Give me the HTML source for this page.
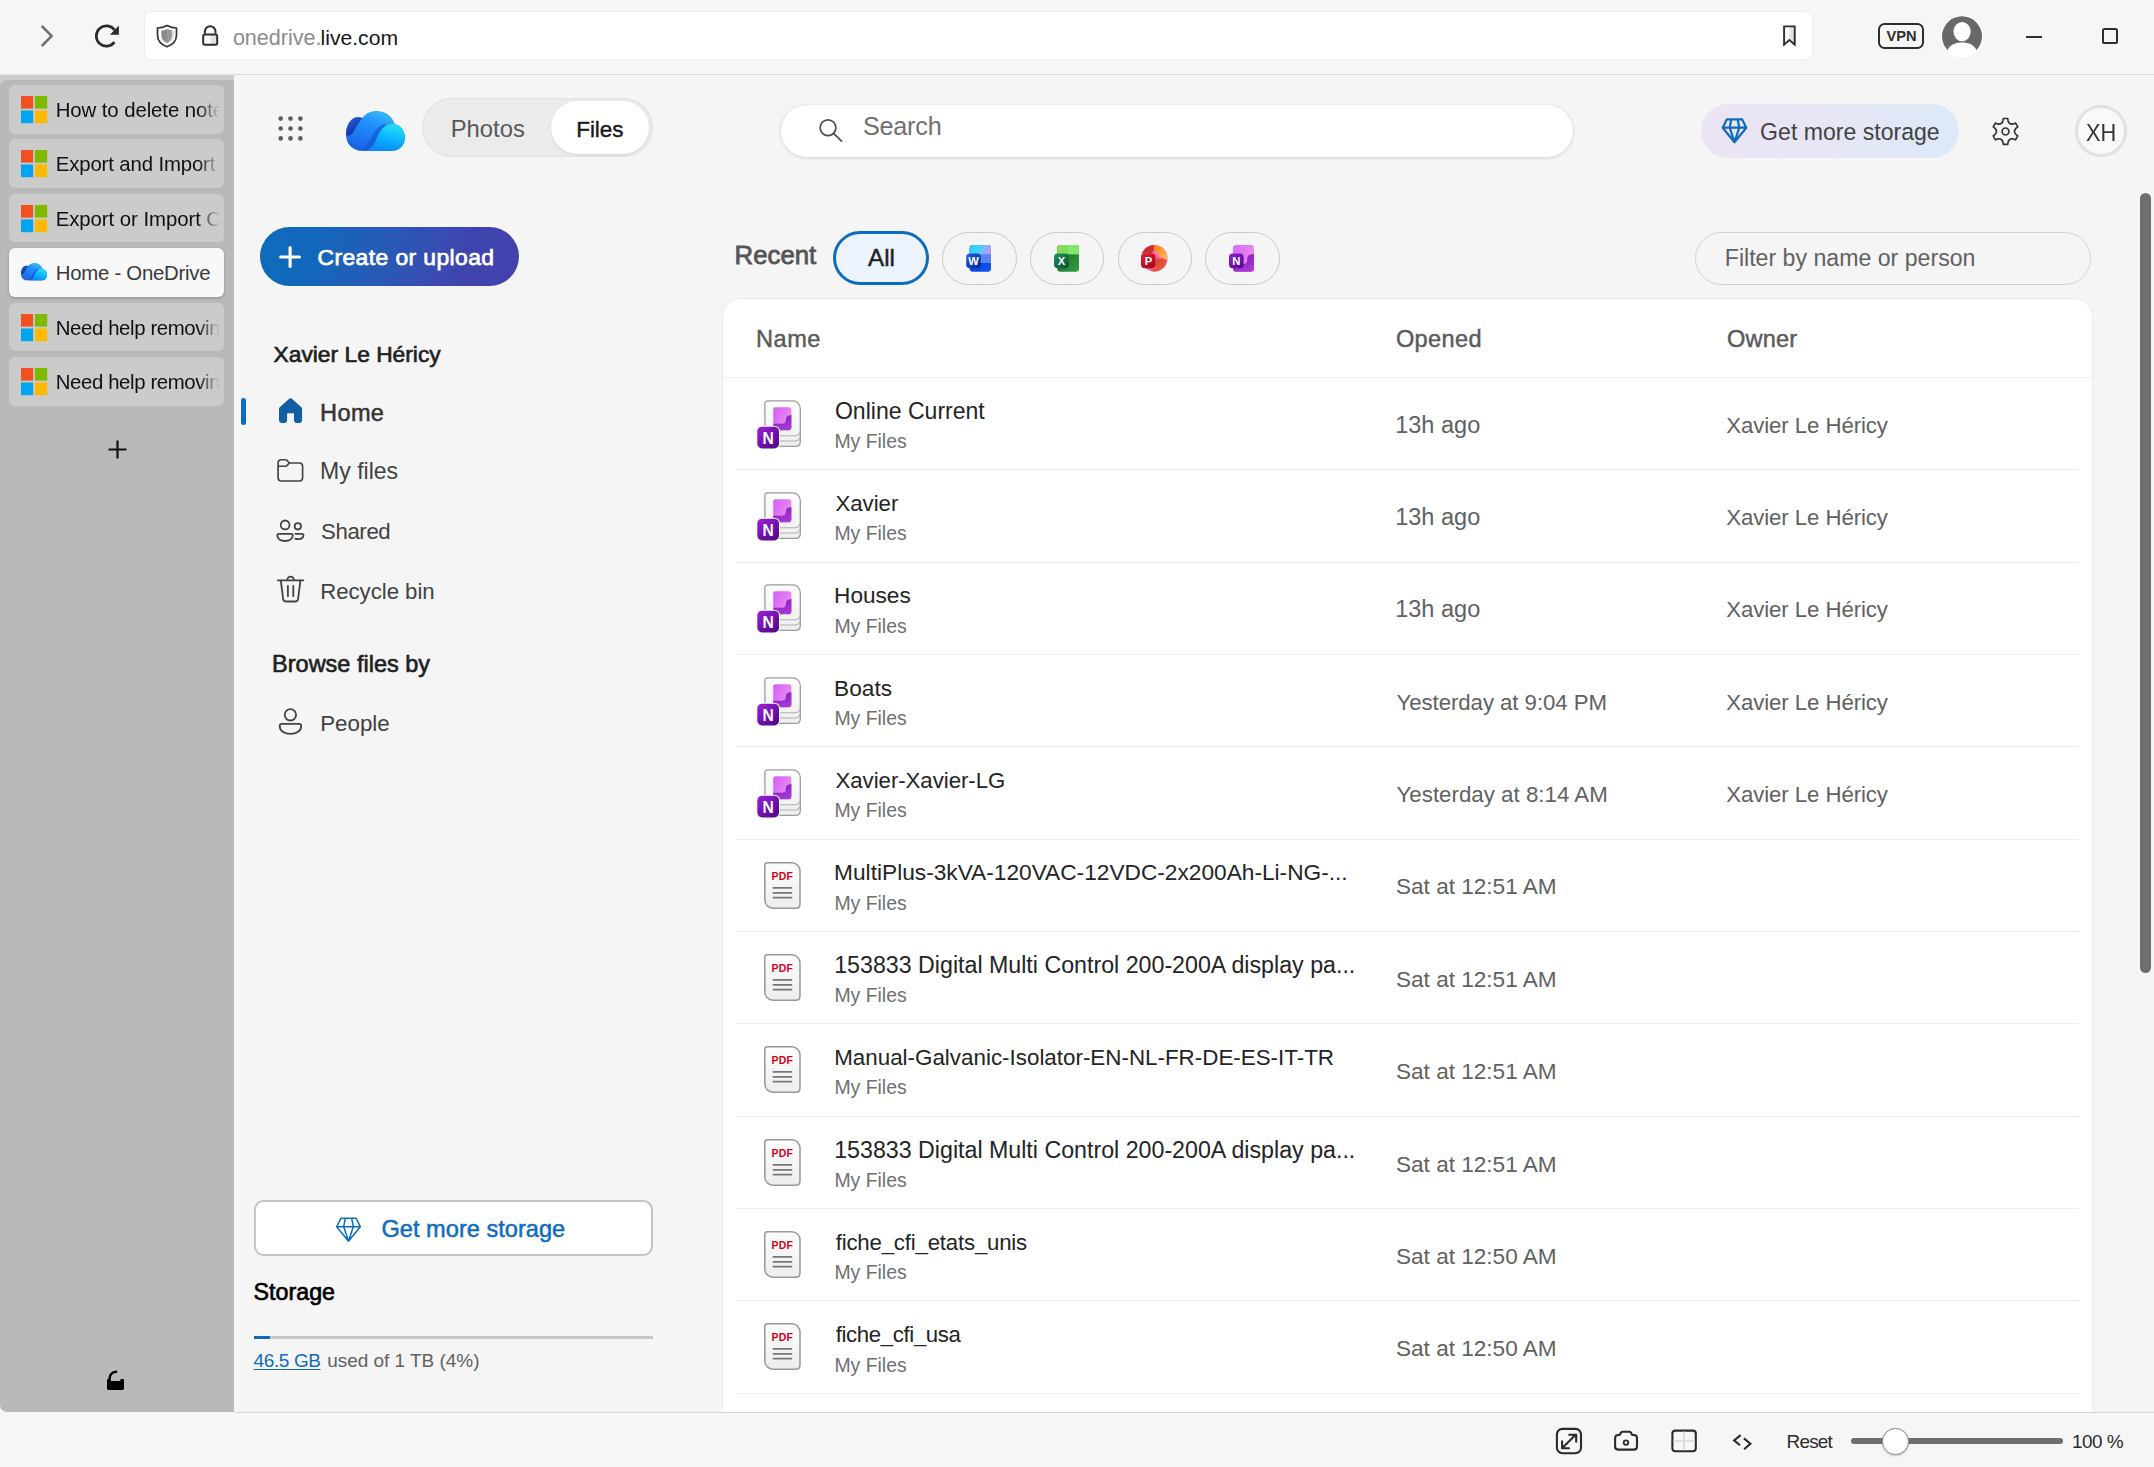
<!DOCTYPE html>
<html lang="en"><head><meta charset="utf-8"><title>Home - OneDrive</title>
<style>
html,body{margin:0;padding:0;}
body{width:2154px;height:1467px;overflow:hidden;background:#f5f5f5;font-family:"Liberation Sans", sans-serif;position:relative;}
.t{position:absolute;white-space:nowrap;}
svg{overflow:visible;}
</style></head><body>
<div style="position:absolute;left:0.0px;top:0.0px;width:2154.0px;height:74.0px;background:#f6f6f6;"></div>
<div style="position:absolute;left:233.5px;top:73.9px;width:1920.5px;height:1.1px;background:#dadada;"></div>
<div style="position:absolute;left:143.6px;top:10.8px;width:1669.7px;height:49.4px;background:#fff;border-radius:7px;border:1px solid #eeeeee;box-sizing:border-box;"></div>
<svg style="position:absolute;left:38.0px;top:23.0px;" width="18.0" height="26.0" viewBox="0 0 18 26"><path d="M3.700 2.800 L13.700 13 L3.700 23.200" fill="none" stroke="#6e6e6e" stroke-width="2.5" stroke-linecap="butt" stroke-linejoin="miter"/></svg>
<svg style="position:absolute;left:0.0px;top:0.0px;" width="130.0" height="60.0" viewBox="0 0 130 60"><path d="M114.470 29.920 A10.100 10.100 0 1 0 114.470 42.080" fill="none" stroke="#2b2b2b" stroke-width="2.700" stroke-linecap="butt"/><path d="M118.900 25.500 V34.700 H109.900 Z" fill="#2b2b2b"/></svg>
<svg style="position:absolute;left:156.0px;top:24.0px;" width="22.0" height="24.0" viewBox="0 0 22 24"><path d="M11 1.5 C8 3.2 5 4 1.5 4 L1.5 11 C1.5 17 5.5 20.8 11 22.8 C16.5 20.8 20.5 17 20.5 11 L20.5 4 C17 4 14 3.2 11 1.5 Z" fill="none" stroke="#333" stroke-width="1.7" stroke-linejoin="round"/><path d="M11 5 C9 6 7 6.600 5 6.800 L5 11 C5 15 7.500 17.600 11 19.200 C15 17.500 18 15 18.300 11 L18.300 7 C16 6.600 13.500 6 11 5 Z" fill="#dedede"/><path d="M11 5 C9 6 7 6.600 5.400 6.800 L5.400 11 C5.400 14.800 7.700 17.400 11 19 C13.500 17.800 15.600 15.500 15.600 11.500 L15.600 6.500 C14 6.200 12.500 5.700 11 5 Z" fill="#8c8c8c"/><path d="M11 5 C12.500 5.700 14 6.200 15.600 6.500 L15.600 11.500 C15.600 15.500 13.500 17.800 11 19 Z" fill="#999"/></svg>
<svg style="position:absolute;left:201.0px;top:24.0px;" width="18.0" height="23.0" viewBox="0 0 18 23"><path d="M3.900 9.700 V7.500 A5.300 5.300 0 0 1 14.500 7.500 V9.700" fill="none" stroke="#2e2e2e" stroke-width="2"/><rect x="2.200" y="10.600" width="14" height="10.200" fill="#fff"/><rect x="9.400" y="10.600" width="6.600" height="10.200" fill="#e2e2e2"/><rect x="2.200" y="10.600" width="14" height="10.200" rx="1.800" fill="none" stroke="#2e2e2e" stroke-width="2"/></svg>
<div class="t " style="left:232.9px;top:23px;font-size:21.56px;line-height:29px;color:#8c8c8c;">onedrive.</div>
<div class="t " style="left:320.5px;top:24px;font-size:21.14px;line-height:27px;color:#161616;">live.com</div>
<svg style="position:absolute;left:1781.0px;top:24.0px;" width="17.0" height="23.0" viewBox="0 0 17 23"><path d="M8.400 2.400 H13.700 V20 L8.400 15.400 Z" fill="#e3e3e3"/><path d="M3.100 2.400 H13.700 V20.600 L8.400 16 L3.100 20.600 Z" fill="none" stroke="#2e2e2e" stroke-width="1.900" stroke-linejoin="miter"/></svg>
<div style="position:absolute;left:1878.0px;top:23.0px;width:46.0px;height:26.0px;border:2.4px solid #2e2e2e;border-radius:6.5px;box-sizing:border-box;"></div>
<div class="t " style="left:1886.5px;top:26px;font-size:14.63px;line-height:20px;color:#2e2e2e;font-weight:700;">VPN</div>
<svg style="position:absolute;left:1941.0px;top:14.0px;" width="43.0" height="45.0" viewBox="0 0 43 45"><circle cx="21" cy="22.300" r="21.300" fill="#fff"/><circle cx="21" cy="22.300" r="20" fill="#686868"/><ellipse cx="21.100" cy="17.600" rx="8.600" ry="9.600" fill="#fff"/><path d="M6.300 36.200 C9 30.800 14 28.400 21 28.400 C28 28.400 33 30.800 35.700 36.200 C32.500 40.800 27 43.700 21 43.700 C15 43.700 9.500 40.800 6.300 36.200 Z" fill="#fff"/></svg>
<div style="position:absolute;left:2026.2px;top:36.0px;width:15.6px;height:2.0px;background:#2e2e2e;"></div>
<div style="position:absolute;left:2102.2px;top:28.2px;width:15.8px;height:16.1px;border:2.1px solid #2e2e2e;border-radius:2.6px;box-sizing:border-box;"></div>
<div style="position:absolute;left:0.0px;top:73.7px;width:233.5px;height:12.3px;background:linear-gradient(180deg,#f0f0f0 0,#cecece 1.6px,#cccccc 2.5px,#cccccc 100%);"></div>
<div style="position:absolute;left:0.0px;top:80.0px;width:233.5px;height:1332.0px;background:#b9b9b9;border-radius:6.5px 0 0 7px;"></div>
<div style="position:absolute;left:9.0px;top:85.0px;width:215.0px;height:48.6px;background:#cbcbcb;border-radius:6px;overflow:hidden;"></div>
<svg style="position:absolute;left:20.9px;top:95.9px;" width="26.2" height="27.2" viewBox="0 0 26.2 27.2"><rect x="0" y="0" width="12.100" height="12.600" fill="#f25022"/><rect x="13.900" y="0" width="12.300" height="12.600" fill="#7fba00"/><rect x="0" y="14.500" width="12.100" height="12.700" fill="#00a4ef"/><rect x="13.900" y="14.500" width="12.300" height="12.700" fill="#ffb900"/></svg>
<div style="position:absolute;left:9.0px;top:139.4px;width:215.0px;height:48.6px;background:#cbcbcb;border-radius:6px;overflow:hidden;"></div>
<svg style="position:absolute;left:20.9px;top:150.3px;" width="26.2" height="27.2" viewBox="0 0 26.2 27.2"><rect x="0" y="0" width="12.100" height="12.600" fill="#f25022"/><rect x="13.900" y="0" width="12.300" height="12.600" fill="#7fba00"/><rect x="0" y="14.500" width="12.100" height="12.700" fill="#00a4ef"/><rect x="13.900" y="14.500" width="12.300" height="12.700" fill="#ffb900"/></svg>
<div style="position:absolute;left:9.0px;top:193.9px;width:215.0px;height:48.6px;background:#cbcbcb;border-radius:6px;overflow:hidden;"></div>
<svg style="position:absolute;left:20.9px;top:204.8px;" width="26.2" height="27.2" viewBox="0 0 26.2 27.2"><rect x="0" y="0" width="12.100" height="12.600" fill="#f25022"/><rect x="13.900" y="0" width="12.300" height="12.600" fill="#7fba00"/><rect x="0" y="14.500" width="12.100" height="12.700" fill="#00a4ef"/><rect x="13.900" y="14.500" width="12.300" height="12.700" fill="#ffb900"/></svg>
<div style="position:absolute;left:9.0px;top:248.4px;width:215.0px;height:48.6px;background:#f8f8f8;border-radius:6px;box-shadow:0 1px 3px rgba(0,0,0,.25);"></div>
<svg style="position:absolute;left:20.9px;top:262.5px;" width="26.1" height="17.6" viewBox="0 0 59 39.7"><defs>
<linearGradient id="cs0" x1="0.1" y1="0.1" x2="0.6" y2="1"><stop offset="0" stop-color="#2d63d8"/><stop offset="1" stop-color="#0a2a9c"/></linearGradient>
<linearGradient id="cs1" x1="0.75" y1="0" x2="0.2" y2="1"><stop offset="0" stop-color="#3fc4f4"/><stop offset="0.35" stop-color="#2393fb"/><stop offset="1" stop-color="#1660e4"/></linearGradient>
<linearGradient id="cs2" x1="0.7" y1="0" x2="0.35" y2="1"><stop offset="0" stop-color="#2ae0ee"/><stop offset="0.5" stop-color="#0ab4ff"/><stop offset="1" stop-color="#0a86fb"/></linearGradient>
<linearGradient id="cs3" x1="0" y1="0" x2="1" y2="0.3"><stop offset="0" stop-color="#1247c8" stop-opacity="0"/><stop offset="1" stop-color="#1247c8" stop-opacity="0.75"/></linearGradient>
<clipPath id="csc"><path d="M0 24 C0 14 5 6.300 12 6.300 C13.5 6.300 15 6.500 16.500 6.900 C19.500 2.700 24.500 0 30.700 0 C39.500 0 46.500 5.200 48.700 12.900 C54.500 13.800 59 19.500 59 26.500 C59 33.800 53.500 39.700 46.500 39.700 L15.500 39.700 C7 39.700 0 33 0 24 Z"/></clipPath></defs>
<g clip-path="url(#csc)"><rect x="0" y="0" width="59" height="40" fill="url(#cs1)"/>
<path d="M6 40 C17 39.500 21 34 24.500 27.500 C28 20.500 32 14 40 13 L46 40 Z" fill="url(#cs3)"/>
<path d="M-1 24 C-1 13 4 5 12 5 L17.500 6 C13.500 10 10.800 15 8.300 19.500 C6.700 22.400 4.800 24.600 2.700 24.600 C1.300 24.600 -0.500 24.500 -1 24 Z" fill="url(#cs0)"/>
<path d="M17.500 39.800 C25.500 38.800 28 33.500 30.500 27.800 C33.500 20.800 37.500 13 46.300 13 C53.700 13 59.500 19 59.500 26.500 C59.500 34 54 40.200 46.500 40.200 L17.500 40.200 Z" fill="url(#cs2)"/></g></svg>
<div class="t " style="left:55.7px;top:260px;font-size:20.37px;line-height:26px;color:#3a3a3a;letter-spacing:-0.250px;">Home - OneDrive</div>
<div style="position:absolute;left:9.0px;top:302.8px;width:215.0px;height:48.6px;background:#cbcbcb;border-radius:6px;overflow:hidden;"></div>
<svg style="position:absolute;left:20.9px;top:313.7px;" width="26.2" height="27.2" viewBox="0 0 26.2 27.2"><rect x="0" y="0" width="12.100" height="12.600" fill="#f25022"/><rect x="13.900" y="0" width="12.300" height="12.600" fill="#7fba00"/><rect x="0" y="14.500" width="12.100" height="12.700" fill="#00a4ef"/><rect x="13.900" y="14.500" width="12.300" height="12.700" fill="#ffb900"/></svg>
<div style="position:absolute;left:9.0px;top:357.2px;width:215.0px;height:48.6px;background:#cbcbcb;border-radius:6px;overflow:hidden;"></div>
<svg style="position:absolute;left:20.9px;top:368.1px;" width="26.2" height="27.2" viewBox="0 0 26.2 27.2"><rect x="0" y="0" width="12.100" height="12.600" fill="#f25022"/><rect x="13.900" y="0" width="12.300" height="12.600" fill="#7fba00"/><rect x="0" y="14.500" width="12.100" height="12.700" fill="#00a4ef"/><rect x="13.900" y="14.500" width="12.300" height="12.700" fill="#ffb900"/></svg>
<div class="t " style="left:55.7px;top:97px;font-size:20.37px;line-height:26px;color:#101010;letter-spacing:-0.076px;-webkit-mask-image:linear-gradient(90deg,#000 0,#000 142px,transparent 164px);mask-image:linear-gradient(90deg,#000 0,#000 142px,transparent 164px);">How to delete note</div>
<div class="t " style="left:55.7px;top:151px;font-size:20.37px;line-height:26px;color:#101010;letter-spacing:-0.130px;-webkit-mask-image:linear-gradient(90deg,#000 0,#000 142px,transparent 164px);mask-image:linear-gradient(90deg,#000 0,#000 142px,transparent 164px);">Export and Import</div>
<div class="t " style="left:55.7px;top:206px;font-size:20.37px;line-height:26px;color:#101010;letter-spacing:-0.056px;-webkit-mask-image:linear-gradient(90deg,#000 0,#000 142px,transparent 164px);mask-image:linear-gradient(90deg,#000 0,#000 142px,transparent 164px);">Export or Import C</div>
<div class="t " style="left:55.7px;top:315px;font-size:20.37px;line-height:26px;color:#101010;letter-spacing:-0.374px;-webkit-mask-image:linear-gradient(90deg,#000 0,#000 142px,transparent 164px);mask-image:linear-gradient(90deg,#000 0,#000 142px,transparent 164px);">Need help removin</div>
<div class="t " style="left:55.7px;top:369px;font-size:20.37px;line-height:26px;color:#101010;letter-spacing:-0.374px;-webkit-mask-image:linear-gradient(90deg,#000 0,#000 142px,transparent 164px);mask-image:linear-gradient(90deg,#000 0,#000 142px,transparent 164px);">Need help removin</div>
<svg style="position:absolute;left:107.5px;top:439.5px;" width="19.0" height="19.0" viewBox="0 0 19 19"><path d="M9.5 0.5 V18.5 M0.500 9.5 H18.5" stroke="#111" stroke-width="2.2" fill="none"/></svg>
<svg style="position:absolute;left:106.0px;top:1369.0px;" width="20.0" height="22.0" viewBox="0 0 20 22"><path d="M3.300 11.500 C3.300 6.200 6 2.700 10.200 2.700" fill="none" stroke="#000" stroke-width="2.450" stroke-linecap="round"/><rect x="1" y="11.900" width="17" height="9.100" rx="1.400" fill="#000"/><rect x="1" y="10.100" width="3.700" height="4" rx="0.800" fill="#000"/><rect x="14.300" y="10.100" width="3.700" height="4" rx="0.800" fill="#000"/></svg>
<div style="position:absolute;left:0.0px;top:1412.0px;width:2154.0px;height:55.0px;background:#f6f6f6;"></div>
<div style="position:absolute;left:233.5px;top:1411.7px;width:1920.5px;height:1.3px;background:#d6d6d6;"></div>
<svg style="position:absolute;left:0.0px;top:0.0px;pointer-events:none;" width="2154.0" height="200.0" viewBox="0 0 2154 200"><circle cx="280.7" cy="118.6" r="2.3" fill="#5c5c5c"/><circle cx="290.5" cy="118.6" r="2.3" fill="#5c5c5c"/><circle cx="300.4" cy="118.6" r="2.3" fill="#5c5c5c"/><circle cx="280.7" cy="128.5" r="2.3" fill="#5c5c5c"/><circle cx="290.5" cy="128.5" r="2.3" fill="#5c5c5c"/><circle cx="300.4" cy="128.5" r="2.3" fill="#5c5c5c"/><circle cx="280.7" cy="138.4" r="2.3" fill="#5c5c5c"/><circle cx="290.5" cy="138.4" r="2.3" fill="#5c5c5c"/><circle cx="300.4" cy="138.4" r="2.3" fill="#5c5c5c"/></svg>
<svg style="position:absolute;left:346.2px;top:110.9px;" width="59.0" height="39.7" viewBox="0 0 59 39.7"><defs>
<linearGradient id="cb0" x1="0.1" y1="0.1" x2="0.6" y2="1"><stop offset="0" stop-color="#2d63d8"/><stop offset="1" stop-color="#0a2a9c"/></linearGradient>
<linearGradient id="cb1" x1="0.75" y1="0" x2="0.2" y2="1"><stop offset="0" stop-color="#3fc4f4"/><stop offset="0.35" stop-color="#2393fb"/><stop offset="1" stop-color="#1660e4"/></linearGradient>
<linearGradient id="cb2" x1="0.7" y1="0" x2="0.35" y2="1"><stop offset="0" stop-color="#2ae0ee"/><stop offset="0.5" stop-color="#0ab4ff"/><stop offset="1" stop-color="#0a86fb"/></linearGradient>
<linearGradient id="cb3" x1="0" y1="0" x2="1" y2="0.3"><stop offset="0" stop-color="#1247c8" stop-opacity="0"/><stop offset="1" stop-color="#1247c8" stop-opacity="0.75"/></linearGradient>
<clipPath id="cbc"><path d="M0 24 C0 14 5 6.300 12 6.300 C13.5 6.300 15 6.500 16.500 6.900 C19.500 2.700 24.500 0 30.700 0 C39.500 0 46.500 5.200 48.700 12.900 C54.500 13.800 59 19.500 59 26.500 C59 33.800 53.500 39.700 46.500 39.700 L15.500 39.700 C7 39.700 0 33 0 24 Z"/></clipPath></defs>
<g clip-path="url(#cbc)"><rect x="0" y="0" width="59" height="40" fill="url(#cb1)"/>
<path d="M6 40 C17 39.500 21 34 24.500 27.500 C28 20.500 32 14 40 13 L46 40 Z" fill="url(#cb3)"/>
<path d="M-1 24 C-1 13 4 5 12 5 L17.500 6 C13.500 10 10.800 15 8.300 19.500 C6.700 22.400 4.800 24.600 2.700 24.600 C1.300 24.600 -0.500 24.500 -1 24 Z" fill="url(#cb0)"/>
<path d="M17.500 39.800 C25.500 38.800 28 33.500 30.500 27.800 C33.500 20.800 37.500 13 46.300 13 C53.700 13 59.500 19 59.500 26.500 C59.500 34 54 40.200 46.500 40.200 L17.500 40.200 Z" fill="url(#cb2)"/></g></svg>
<div style="position:absolute;left:422.0px;top:98.0px;width:230.7px;height:58.7px;background:#ebebeb;border-radius:30px;box-shadow:inset 0 0 0 1.2px #e2e2e2;"></div>
<div style="position:absolute;left:550.7px;top:101.3px;width:98.6px;height:52.7px;background:#fff;border-radius:27px;box-shadow:0 1px 2px rgba(0,0,0,.10);"></div>
<div class="t " style="left:450.7px;top:113px;font-size:23.81px;line-height:31px;color:#585858;">Photos</div>
<div class="t " style="left:576.2px;top:115px;font-size:22.43px;line-height:29px;color:#1a1a1a;-webkit-text-stroke:0.40px #1a1a1a;">Files</div>
<div style="position:absolute;left:780.7px;top:104.7px;width:792.6px;height:52.6px;background:#fff;border-radius:27px;box-shadow:0 1px 4px rgba(0,0,0,.13),0 0 1px rgba(0,0,0,.10);"></div>
<svg style="position:absolute;left:818.0px;top:118.4px;" width="26.0" height="26.0" viewBox="0 0 26 26"><circle cx="10" cy="9.800" r="7.900" fill="none" stroke="#505050" stroke-width="1.750"/><path d="M15.600 15.400 L23.500 23.200" stroke="#505050" stroke-width="1.750" stroke-linecap="round"/></svg>
<div class="t " style="left:862.9px;top:110px;font-size:25.22px;line-height:32px;color:#707070;letter-spacing:-0.225px;">Search</div>
<div style="position:absolute;left:1700.7px;top:104.0px;width:258.0px;height:54.0px;background:linear-gradient(90deg,#ece4f5 0%,#e6e6f6 50%,#dde9f7 100%);border-radius:27px;"></div>
<svg style="position:absolute;left:1721.0px;top:118.0px;" width="27.0" height="26.0" viewBox="0 0 27 26"><path d="M5.900 1.300 L21.100 1.300 L25.300 9.700 L13.500 24.200 L1.700 9.700 Z M1.700 9.700 H25.300 M10.300 1.300 L8.700 9.700 L13.500 24.200 M16.700 1.300 L18.300 9.700 L13.500 24.200" fill="none" stroke="#0f6cbd" stroke-width="2.2" stroke-linejoin="round"/></svg>
<div class="t " style="left:1760.1px;top:117px;font-size:23.08px;line-height:30px;color:#424242;">Get more storage</div>
<svg style="position:absolute;left:0.0px;top:0.0px;pointer-events:none;" width="2154.0" height="200.0" viewBox="0 0 2154 200"><path d="M2002.90 120.90 L2003.26 118.50 L2007.74 118.50 L2008.10 120.90 Q2009.30 124.81 2013.29 123.90 L2015.55 123.01 L2017.79 126.89 L2015.89 128.40 Q2013.11 131.40 2015.89 134.40 L2017.79 135.91 L2015.55 139.79 L2013.29 138.90 Q2009.30 137.99 2008.10 141.90 L2007.74 144.30 L2003.26 144.30 L2002.90 141.90 Q2001.70 137.99 1997.71 138.90 L1995.45 139.79 L1993.21 135.91 L1995.11 134.40 Q1997.89 131.40 1995.11 128.40 L1993.21 126.89 L1995.45 123.01 L1997.71 123.90 Q2001.70 124.81 2002.90 120.90 Z" fill="none" stroke="#333" stroke-width="1.65" stroke-linejoin="round"/><circle cx="2005.5" cy="131.4" r="3.400" fill="none" stroke="#333" stroke-width="1.65"/></svg>
<div style="position:absolute;left:2075.2px;top:105.1px;width:51.6px;height:51.6px;border:3px solid #e1e1e1;border-radius:50%;box-sizing:border-box;background:#f9f9f9;"></div>
<div class="t " style="left:2086.2px;top:118px;font-size:23.20px;line-height:30px;color:#333;transform:scaleX(0.9391);transform-origin:0 50%;">XH</div>
<div style="position:absolute;left:2140.0px;top:193.3px;width:11.0px;height:779.7px;background:#6e6e6e;border-radius:6px;"></div>
<div style="position:absolute;left:260.0px;top:226.7px;width:258.7px;height:59.3px;background:linear-gradient(108deg,#0f6cbd 0%,#1267bb 22%,#2b58b4 52%,#3f45ae 76%,#4341ad 100%);border-radius:30px;"></div>
<svg style="position:absolute;left:279.0px;top:245.5px;" width="22.0" height="22.0" viewBox="0 0 22 22"><path d="M11.100 1.600 V20.400 M1.700 11 H20.500" stroke="#fff" stroke-width="3.100" stroke-linecap="round" fill="none"/></svg>
<div class="t " style="left:317.5px;top:242px;font-size:22.90px;line-height:30px;color:#fff;letter-spacing:0.403px;-webkit-text-stroke:0.75px #fff;">Create or upload</div>
<div class="t " style="left:273.5px;top:339px;font-size:22.80px;line-height:30px;color:#1f1f1f;-webkit-text-stroke:0.65px #1f1f1f;">Xavier Le Héricy</div>
<div style="position:absolute;left:240.9px;top:398.0px;width:5.1px;height:27.1px;background:#0f6cbd;border-radius:3px;"></div>
<svg style="position:absolute;left:278.9px;top:398.0px;" width="23.1" height="25.0" viewBox="0 0 23.1 25"><path d="M10.300 0.700 C11 0.100 12.100 0.100 12.800 0.700 L22.200 9 C22.800 9.500 23.100 10.200 23.100 11 V22.300 C23.100 23.800 21.900 25 20.400 25 H17.700 C16.200 25 15 23.800 15 22.300 V16.300 C15 15.700 14.600 15.300 14 15.300 H9.100 C8.500 15.300 8.100 15.700 8.100 16.300 V22.300 C8.100 23.800 6.900 25 5.400 25 H2.700 C1.200 25 0 23.800 0 22.300 V11 C0 10.200 0.300 9.500 0.900 9 Z" fill="#115ea3"/></svg>
<div class="t " style="left:320.1px;top:398px;font-size:23.59px;line-height:30px;color:#333;letter-spacing:0.322px;-webkit-text-stroke:0.50px #333;">Home</div>
<svg style="position:absolute;left:273.9px;top:454.1px;" width="32.7" height="32.7" viewBox="0 0 20 20"><path d="M4.500 3A2.500 2.500 0 0 0 2 5.500v9A2.500 2.500 0 0 0 4.500 17h11a2.500 2.500 0 0 0 2.500-2.500v-7A2.500 2.500 0 0 0 15.500 5H9.700L8.220 3.510A1.750 1.750 0 0 0 6.980 3H4.500ZM3 5.500C3 4.670 3.670 4 4.500 4h2.480c.2 0 .39.080.53.220L8.800 5.500 7.500 6.780a.75.750 0 0 1-.53.220H3V5.500ZM3 8h3.980c.46 0 .9-.18 1.230-.51L9.710 6h5.790c.830 0 1.500.670 1.500 1.500v7c0 .830-.67 1.500-1.500 1.500h-11A1.500 1.500 0 0 1 3 14.500V8Z" fill="#424242"/></svg>
<div class="t " style="left:320.1px;top:456px;font-size:23.02px;line-height:30px;color:#424242;">My files</div>
<svg style="position:absolute;left:270.0px;top:515.0px;" width="40.0" height="32.0" viewBox="0 0 40 32"><g fill="none" stroke="#424242" stroke-width="1.8"><circle cx="15.100" cy="9.900" r="4.400"/><circle cx="27.800" cy="11.300" r="3.200"/><path d="M9 18.800 H21.300 C22.200 18.800 22.800 19.500 22.800 20.300 C22.800 24 19.300 26 14.900 26 C10.500 26 7.300 24 7.300 20.300 C7.300 19.500 8 18.800 9 18.800 Z"/><path d="M25.300 18.800 H32 C32.900 18.800 33.600 19.500 33.500 20.400 C33.200 22.900 31.100 24.100 28.300 24.100 C27.200 24.100 26.100 24 25.300 23.600" stroke-linecap="round"/></g></svg>
<div class="t " style="left:321.0px;top:517px;font-size:22.21px;line-height:29px;color:#424242;letter-spacing:-0.378px;">Shared</div>
<svg style="position:absolute;left:275.0px;top:572.0px;" width="32.0" height="32.0" viewBox="0 0 32 32"><g fill="none" stroke="#424242" stroke-width="1.8" stroke-linecap="round" stroke-linejoin="round"><path d="M2.800 8.300 H28.400"/><path d="M12.300 8 A3.300 3.300 0 0 1 18.900 8"/><path d="M5.800 8.600 L8.100 26.800 C8.300 28.300 9.500 29.500 11.100 29.500 H20.100 C21.700 29.500 22.900 28.300 23.100 26.800 L25.400 8.600"/><path d="M12.900 14 V24.200 M18.300 14 V24.200"/></g></svg>
<div class="t " style="left:320.2px;top:577px;font-size:22.21px;line-height:29px;color:#424242;letter-spacing:-0.025px;">Recycle bin</div>
<div class="t " style="left:272.1px;top:649px;font-size:23.49px;line-height:30px;color:#1f1f1f;-webkit-text-stroke:0.65px #1f1f1f;">Browse files by</div>
<svg style="position:absolute;left:275.0px;top:705.0px;" width="32.0" height="32.0" viewBox="0 0 32 32"><g fill="none" stroke="#424242" stroke-width="1.8"><circle cx="15.400" cy="9.800" r="5.700"/><path d="M6.700 18.900 H24.100 C25.300 18.900 26.200 19.900 26.200 21.100 C26.200 26 21.500 28.900 15.400 28.900 C9.300 28.900 4.700 26 4.700 21.100 C4.700 19.900 5.600 18.900 6.700 18.900 Z"/></g></svg>
<div class="t " style="left:320.2px;top:709px;font-size:22.33px;line-height:29px;color:#424242;">People</div>
<div style="position:absolute;left:253.6px;top:1199.7px;width:399.4px;height:56.6px;background:#fff;border:2px solid #c4c4c4;border-radius:9.5px;box-sizing:border-box;"></div>
<svg style="position:absolute;left:335.0px;top:1216.6px;" width="27.0" height="26.0" viewBox="0 0 27 26"><path d="M5.900 1.300 L21.100 1.300 L25.300 9.700 L13.500 24.200 L1.700 9.700 Z M1.700 9.700 H25.300 M10.300 1.300 L8.700 9.700 L13.500 24.200 M16.700 1.300 L18.300 9.700 L13.500 24.200" fill="none" stroke="#0f6cbd" stroke-width="1.5" stroke-linejoin="round"/></svg>
<div class="t " style="left:381.5px;top:1214px;font-size:23.59px;line-height:30px;color:#0f6cbd;letter-spacing:0.013px;-webkit-text-stroke:0.50px #0f6cbd;">Get more storage</div>
<div class="t " style="left:253.6px;top:1277px;font-size:23.24px;line-height:30px;color:#000;-webkit-text-stroke:0.65px #000;">Storage</div>
<div style="position:absolute;left:254.0px;top:1335.8px;width:398.7px;height:3.4px;background:#c8c8c8;"></div>
<div style="position:absolute;left:254.0px;top:1335.8px;width:16.0px;height:3.4px;background:#0f6cbd;"></div>
<div class="t " style="left:253.6px;top:1348px;font-size:19.01px;line-height:25px;color:#0f6cbd;letter-spacing:-0.386px;text-decoration:underline;text-underline-offset:2px;">46.5 GB</div>
<div class="t " style="left:327.2px;top:1348px;font-size:19.01px;line-height:25px;color:#616161;letter-spacing:-0.025px;">used of 1 TB (4%)</div>
<div class="t " style="left:734.6px;top:239px;font-size:25.75px;line-height:32px;color:#555;-webkit-text-stroke:0.80px #555;">Recent</div>
<div style="position:absolute;left:833.3px;top:231.3px;width:95.4px;height:53.4px;background:#ebf3fc;border:3px solid #0f6cbd;border-radius:28px;box-sizing:border-box;"></div>
<div class="t " style="left:868.0px;top:242px;font-size:24.10px;line-height:31px;color:#242424;letter-spacing:0.087px;-webkit-text-stroke:0.50px #242424;">All</div>
<div style="position:absolute;left:942.0px;top:232.0px;width:74.7px;height:52.7px;border:1px solid #c9c9c9;border-radius:27px;box-sizing:border-box;"></div>
<div style="position:absolute;left:1030.2px;top:232.0px;width:73.7px;height:52.7px;border:1px solid #c9c9c9;border-radius:27px;box-sizing:border-box;"></div>
<div style="position:absolute;left:1118.4px;top:232.0px;width:73.6px;height:52.7px;border:1px solid #c9c9c9;border-radius:27px;box-sizing:border-box;"></div>
<div style="position:absolute;left:1205.2px;top:232.0px;width:74.5px;height:52.7px;border:1px solid #c9c9c9;border-radius:27px;box-sizing:border-box;"></div>
<svg style="position:absolute;left:966.0px;top:244.9px;" width="26.0" height="27.0" viewBox="0 0 26 27"><defs><linearGradient id="w1" x1="0" y1="0" x2="1" y2="0.4"><stop offset="0" stop-color="#24c8ff"/><stop offset="0.55" stop-color="#3fd3ff"/><stop offset="1" stop-color="#b39cf6"/></linearGradient>
<linearGradient id="w2" x1="0" y1="0" x2="1" y2="0"><stop offset="0" stop-color="#1f9af5"/><stop offset="1" stop-color="#6b7ff0"/></linearGradient>
<linearGradient id="w3" x1="0" y1="0" x2="1" y2="1"><stop offset="0" stop-color="#0a35d8"/><stop offset="1" stop-color="#0f55ea"/></linearGradient>
<linearGradient id="w4" x1="0" y1="0" x2="1" y2="1"><stop offset="0" stop-color="#2562e0"/><stop offset="1" stop-color="#08229a"/></linearGradient>
<clipPath id="wc"><rect x="3.700" y="0" width="21.300" height="26.800" rx="3.200"/></clipPath></defs>
<g clip-path="url(#wc)"><rect x="3" y="0" width="23" height="27" fill="url(#w3)"/><rect x="3" y="0" width="23" height="18" rx="2.500" fill="url(#w2)"/><rect x="3" y="-3" width="23" height="12.200" rx="2.500" fill="url(#w1)"/></g>
<rect x="0.200" y="8.400" width="14.600" height="14.800" rx="3.600" fill="url(#w4)"/>
<text x="7.500" y="19.900" font-family="Liberation Sans, sans-serif" font-weight="700" font-size="11.200" fill="#fff" text-anchor="middle">W</text></svg>
<svg style="position:absolute;left:1054.0px;top:244.9px;" width="26.0" height="27.0" viewBox="0 0 26 27"><defs><linearGradient id="x1" x1="0" y1="0" x2="1" y2="0"><stop offset="0" stop-color="#8ddc5c"/><stop offset="1" stop-color="#6fd85a"/></linearGradient>
<linearGradient id="x2" x1="0" y1="0" x2="1" y2="1"><stop offset="0" stop-color="#1b5e25"/><stop offset="1" stop-color="#34a043"/></linearGradient>
<linearGradient id="x3" x1="0" y1="0" x2="1" y2="1"><stop offset="0" stop-color="#22945a"/><stop offset="1" stop-color="#0a4f2c"/></linearGradient>
<clipPath id="xc"><rect x="3.300" y="0" width="21.700" height="26.800" rx="3.200"/></clipPath></defs>
<g clip-path="url(#xc)"><rect x="3" y="0" width="23" height="27" fill="url(#x2)"/><rect x="3" y="-3" width="23" height="12.200" rx="2" fill="url(#x1)"/><rect x="13.600" y="-3" width="13" height="12.200" rx="2" fill="#7fe86c"/></g>
<rect x="0" y="8.600" width="14.800" height="14.600" rx="3.600" fill="url(#x3)"/>
<text x="7.400" y="19.900" font-family="Liberation Sans, sans-serif" font-weight="700" font-size="11.200" fill="#fff" text-anchor="middle">X</text></svg>
<svg style="position:absolute;left:1141.2px;top:244.9px;" width="27.0" height="27.0" viewBox="0 0 27 27"><defs><linearGradient id="p1" x1="0.2" y1="0" x2="1" y2="0.8"><stop offset="0" stop-color="#ff7f1a"/><stop offset="1" stop-color="#ffb868"/></linearGradient>
<linearGradient id="p2" x1="0" y1="0" x2="1" y2="1"><stop offset="0" stop-color="#d23a30"/><stop offset="1" stop-color="#f2643c"/></linearGradient>
<linearGradient id="p3" x1="0" y1="0" x2="1" y2="1"><stop offset="0" stop-color="#e21c3a"/><stop offset="1" stop-color="#a00612"/></linearGradient>
<linearGradient id="p4" x1="0" y1="0" x2="1" y2="1"><stop offset="0" stop-color="#ff78c0"/><stop offset="1" stop-color="#f0508c"/></linearGradient>
<clipPath id="pcc"><circle cx="13.300" cy="13.200" r="13.200"/></clipPath></defs>
<g clip-path="url(#pcc)"><rect x="0" y="0" width="27" height="27" fill="url(#p4)"/><path d="M12.500 -1 H28 V15 L22 13.500 C18 12 14 8 12.500 3 Z" fill="url(#p1)"/><path d="M-1 -1 H12.800 V4 C12.800 6 11.500 8.400 9 8.400 H-1 Z" fill="#c93028"/><path d="M14.500 13.800 H22 C25 14 26 17 25 20 L20 27 H10 L14.500 22 Z" fill="url(#p2)"/></g>
<rect x="0" y="8.400" width="14.400" height="14.800" rx="3.600" fill="url(#p3)"/>
<text x="7.400" y="19.900" font-family="Liberation Sans, sans-serif" font-weight="700" font-size="11.200" fill="#fff" text-anchor="middle">P</text></svg>
<svg style="position:absolute;left:1228.9px;top:244.9px;" width="26.0" height="27.0" viewBox="0 0 26 27"><defs><linearGradient id="n1" x1="0" y1="0" x2="1" y2="0.3"><stop offset="0" stop-color="#d96cf8"/><stop offset="0.6" stop-color="#e07af6"/><stop offset="1" stop-color="#f08fdc"/></linearGradient>
<linearGradient id="n2" x1="0" y1="0" x2="0.6" y2="1"><stop offset="0" stop-color="#7a1cb4"/><stop offset="1" stop-color="#a83ad8"/></linearGradient>
<linearGradient id="n3" x1="0" y1="0" x2="1" y2="1"><stop offset="0" stop-color="#9420d4"/><stop offset="1" stop-color="#52068a"/></linearGradient>
<clipPath id="nc"><rect x="4" y="0" width="21" height="26.800" rx="3.200"/></clipPath></defs>
<g clip-path="url(#nc)"><rect x="3" y="0" width="23" height="27" fill="url(#n1)"/><path d="M3 19 H14 C17.500 19 18 17 18.200 14.500 C18.400 11.500 19 9.800 22 9.500 L26 8.500 V28 H3 Z" fill="url(#n2)"/></g>
<rect x="0" y="8.600" width="14.600" height="14.600" rx="3.600" fill="url(#n3)"/>
<text x="7.300" y="19.900" font-family="Liberation Sans, sans-serif" font-weight="700" font-size="11.200" fill="#fff" text-anchor="middle">N</text></svg>
<div style="position:absolute;left:1695.3px;top:232.0px;width:395.4px;height:52.7px;border:1px solid #d1d1d1;border-radius:27px;box-sizing:border-box;"></div>
<div class="t " style="left:1724.8px;top:243px;font-size:23.13px;line-height:30px;color:#616161;">Filter by name or person</div>
<div style="position:absolute;left:722.0px;top:298.2px;width:1371.0px;height:1114.8px;background:#fff;border-radius:19.5px 19.5px 0 0;border:1px solid #ebebeb;box-sizing:border-box;"></div>
<div class="t " style="left:756.1px;top:324px;font-size:23.59px;line-height:30px;color:#5a5a5a;letter-spacing:0.455px;-webkit-text-stroke:0.45px #5a5a5a;">Name</div>
<div class="t " style="left:1395.9px;top:324px;font-size:23.59px;line-height:30px;color:#5a5a5a;letter-spacing:0.340px;-webkit-text-stroke:0.45px #5a5a5a;">Opened</div>
<div class="t " style="left:1726.9px;top:324px;font-size:23.59px;line-height:30px;color:#5a5a5a;letter-spacing:0.184px;-webkit-text-stroke:0.45px #5a5a5a;">Owner</div>
<div style="position:absolute;left:723.0px;top:376.9px;width:1369.0px;height:1.0px;background:#efefef;"></div>
<svg style="position:absolute;left:757.2px;top:399.5px;" width="43.5" height="48.5" viewBox="0 0 43.5 48.5"><defs><linearGradient id="f0_1" x1="0" y1="0" x2="0" y2="1"><stop offset="0" stop-color="#fdfdfd"/><stop offset="1" stop-color="#eeeeee"/></linearGradient>
<linearGradient id="f0_2" x1="0" y1="0" x2="1" y2="0.500"><stop offset="0" stop-color="#d55ef5"/><stop offset="0.6" stop-color="#e07af6"/><stop offset="1" stop-color="#f08fdc"/></linearGradient>
<linearGradient id="f0_3" x1="0" y1="0" x2="0.5" y2="1"><stop offset="0" stop-color="#7a1cb4"/><stop offset="1" stop-color="#a83ad8"/></linearGradient>
<linearGradient id="f0_4" x1="0" y1="0" x2="0.8" y2="1"><stop offset="0" stop-color="#9a22d8"/><stop offset="1" stop-color="#56068c"/></linearGradient>
<clipPath id="f0_c"><rect x="16.200" y="7.200" width="18.200" height="23" rx="2.400"/></clipPath></defs>
<path d="M10.400 0.900 H35.500 C40 0.900 43.300 4.200 43.300 8.700 V41.500 C43.300 44.500 41.500 46.400 38.500 46.400 H10.400 C8.800 46.400 7.900 45.400 7.900 43.900 V3.400 C7.900 1.900 8.800 0.900 10.400 0.900 Z" fill="url(#f0_1)" stroke="#9c9c9c" stroke-width="1.300"/>
<path d="M8.500 35.700 H38.200 C40.600 35.700 42.100 34.500 42.700 32.400 M8.500 41 H38.200 C40.600 41 42.100 39.800 42.700 37.700" stroke="#b0b0b0" stroke-width="1.100" fill="none"/>
<g clip-path="url(#f0_c)"><rect x="16" y="7" width="19" height="24" fill="url(#f0_2)"/><path d="M16 23.800 H25.500 C28.200 23.800 28.600 22.100 28.800 20.100 C29 17.500 29.600 15.900 32 15.600 L35 14.900 V31.500 H16 Z" fill="url(#f0_3)"/></g>
<rect x="-0.700" y="25.700" width="23.700" height="23.700" rx="5.600" fill="#fff"/>
<rect x="0.300" y="26.700" width="21.700" height="21.700" rx="4.700" fill="url(#f0_4)"/>
<text x="11.100" y="43.900" font-family="Liberation Sans, sans-serif" font-weight="700" font-size="15.600" fill="#fff" text-anchor="middle">N</text></svg>
<div class="t " style="left:834.9px;top:396px;font-size:23.06px;line-height:30px;color:#242424;">Online Current</div>
<div class="t " style="left:834.4px;top:428px;font-size:19.42px;line-height:26px;color:#707070;">My Files</div>
<div class="t " style="left:1395.2px;top:410px;font-size:23.54px;line-height:30px;color:#616161;">13h ago</div>
<div class="t " style="left:1726.2px;top:411px;font-size:22.21px;line-height:29px;color:#616161;letter-spacing:-0.074px;">Xavier Le Héricy</div>
<div style="position:absolute;left:736.0px;top:469.2px;width:1343.3px;height:1.0px;background:#efefef;"></div>
<svg style="position:absolute;left:757.2px;top:491.8px;" width="43.5" height="48.5" viewBox="0 0 43.5 48.5"><defs><linearGradient id="f1_1" x1="0" y1="0" x2="0" y2="1"><stop offset="0" stop-color="#fdfdfd"/><stop offset="1" stop-color="#eeeeee"/></linearGradient>
<linearGradient id="f1_2" x1="0" y1="0" x2="1" y2="0.500"><stop offset="0" stop-color="#d55ef5"/><stop offset="0.6" stop-color="#e07af6"/><stop offset="1" stop-color="#f08fdc"/></linearGradient>
<linearGradient id="f1_3" x1="0" y1="0" x2="0.5" y2="1"><stop offset="0" stop-color="#7a1cb4"/><stop offset="1" stop-color="#a83ad8"/></linearGradient>
<linearGradient id="f1_4" x1="0" y1="0" x2="0.8" y2="1"><stop offset="0" stop-color="#9a22d8"/><stop offset="1" stop-color="#56068c"/></linearGradient>
<clipPath id="f1_c"><rect x="16.200" y="7.200" width="18.200" height="23" rx="2.400"/></clipPath></defs>
<path d="M10.400 0.900 H35.500 C40 0.900 43.300 4.200 43.300 8.700 V41.500 C43.300 44.500 41.500 46.400 38.500 46.400 H10.400 C8.800 46.400 7.900 45.400 7.900 43.900 V3.400 C7.900 1.900 8.800 0.900 10.400 0.900 Z" fill="url(#f1_1)" stroke="#9c9c9c" stroke-width="1.300"/>
<path d="M8.500 35.700 H38.200 C40.600 35.700 42.100 34.500 42.700 32.400 M8.500 41 H38.200 C40.600 41 42.100 39.800 42.700 37.700" stroke="#b0b0b0" stroke-width="1.100" fill="none"/>
<g clip-path="url(#f1_c)"><rect x="16" y="7" width="19" height="24" fill="url(#f1_2)"/><path d="M16 23.800 H25.500 C28.200 23.800 28.600 22.100 28.800 20.100 C29 17.500 29.600 15.900 32 15.600 L35 14.900 V31.500 H16 Z" fill="url(#f1_3)"/></g>
<rect x="-0.700" y="25.700" width="23.700" height="23.700" rx="5.600" fill="#fff"/>
<rect x="0.300" y="26.700" width="21.700" height="21.700" rx="4.700" fill="url(#f1_4)"/>
<text x="11.100" y="43.900" font-family="Liberation Sans, sans-serif" font-weight="700" font-size="15.600" fill="#fff" text-anchor="middle">N</text></svg>
<div class="t " style="left:835.5px;top:489px;font-size:22.21px;line-height:29px;color:#242424;letter-spacing:-0.019px;">Xavier</div>
<div class="t " style="left:834.4px;top:520px;font-size:19.42px;line-height:26px;color:#707070;">My Files</div>
<div class="t " style="left:1395.2px;top:502px;font-size:23.54px;line-height:30px;color:#616161;">13h ago</div>
<div class="t " style="left:1726.2px;top:503px;font-size:22.21px;line-height:29px;color:#616161;letter-spacing:-0.074px;">Xavier Le Héricy</div>
<div style="position:absolute;left:736.0px;top:561.6px;width:1343.3px;height:1.0px;background:#efefef;"></div>
<svg style="position:absolute;left:757.2px;top:584.2px;" width="43.5" height="48.5" viewBox="0 0 43.5 48.5"><defs><linearGradient id="f2_1" x1="0" y1="0" x2="0" y2="1"><stop offset="0" stop-color="#fdfdfd"/><stop offset="1" stop-color="#eeeeee"/></linearGradient>
<linearGradient id="f2_2" x1="0" y1="0" x2="1" y2="0.500"><stop offset="0" stop-color="#d55ef5"/><stop offset="0.6" stop-color="#e07af6"/><stop offset="1" stop-color="#f08fdc"/></linearGradient>
<linearGradient id="f2_3" x1="0" y1="0" x2="0.5" y2="1"><stop offset="0" stop-color="#7a1cb4"/><stop offset="1" stop-color="#a83ad8"/></linearGradient>
<linearGradient id="f2_4" x1="0" y1="0" x2="0.8" y2="1"><stop offset="0" stop-color="#9a22d8"/><stop offset="1" stop-color="#56068c"/></linearGradient>
<clipPath id="f2_c"><rect x="16.200" y="7.200" width="18.200" height="23" rx="2.400"/></clipPath></defs>
<path d="M10.400 0.900 H35.500 C40 0.900 43.300 4.200 43.300 8.700 V41.500 C43.300 44.500 41.500 46.400 38.500 46.400 H10.400 C8.800 46.400 7.900 45.400 7.900 43.900 V3.400 C7.900 1.900 8.800 0.900 10.400 0.900 Z" fill="url(#f2_1)" stroke="#9c9c9c" stroke-width="1.300"/>
<path d="M8.500 35.700 H38.200 C40.600 35.700 42.100 34.500 42.700 32.400 M8.500 41 H38.200 C40.600 41 42.100 39.800 42.700 37.700" stroke="#b0b0b0" stroke-width="1.100" fill="none"/>
<g clip-path="url(#f2_c)"><rect x="16" y="7" width="19" height="24" fill="url(#f2_2)"/><path d="M16 23.800 H25.500 C28.200 23.800 28.600 22.100 28.800 20.100 C29 17.500 29.600 15.900 32 15.600 L35 14.900 V31.500 H16 Z" fill="url(#f2_3)"/></g>
<rect x="-0.700" y="25.700" width="23.700" height="23.700" rx="5.600" fill="#fff"/>
<rect x="0.300" y="26.700" width="21.700" height="21.700" rx="4.700" fill="url(#f2_4)"/>
<text x="11.100" y="43.900" font-family="Liberation Sans, sans-serif" font-weight="700" font-size="15.600" fill="#fff" text-anchor="middle">N</text></svg>
<div class="t " style="left:834.1px;top:581px;font-size:22.61px;line-height:29px;color:#242424;">Houses</div>
<div class="t " style="left:834.4px;top:613px;font-size:19.42px;line-height:26px;color:#707070;">My Files</div>
<div class="t " style="left:1395.2px;top:594px;font-size:23.54px;line-height:30px;color:#616161;">13h ago</div>
<div class="t " style="left:1726.2px;top:595px;font-size:22.21px;line-height:29px;color:#616161;letter-spacing:-0.074px;">Xavier Le Héricy</div>
<div style="position:absolute;left:736.0px;top:654.0px;width:1343.3px;height:1.0px;background:#efefef;"></div>
<svg style="position:absolute;left:757.2px;top:676.5px;" width="43.5" height="48.5" viewBox="0 0 43.5 48.5"><defs><linearGradient id="f3_1" x1="0" y1="0" x2="0" y2="1"><stop offset="0" stop-color="#fdfdfd"/><stop offset="1" stop-color="#eeeeee"/></linearGradient>
<linearGradient id="f3_2" x1="0" y1="0" x2="1" y2="0.500"><stop offset="0" stop-color="#d55ef5"/><stop offset="0.6" stop-color="#e07af6"/><stop offset="1" stop-color="#f08fdc"/></linearGradient>
<linearGradient id="f3_3" x1="0" y1="0" x2="0.5" y2="1"><stop offset="0" stop-color="#7a1cb4"/><stop offset="1" stop-color="#a83ad8"/></linearGradient>
<linearGradient id="f3_4" x1="0" y1="0" x2="0.8" y2="1"><stop offset="0" stop-color="#9a22d8"/><stop offset="1" stop-color="#56068c"/></linearGradient>
<clipPath id="f3_c"><rect x="16.200" y="7.200" width="18.200" height="23" rx="2.400"/></clipPath></defs>
<path d="M10.400 0.900 H35.500 C40 0.900 43.300 4.200 43.300 8.700 V41.500 C43.300 44.500 41.500 46.400 38.500 46.400 H10.400 C8.800 46.400 7.900 45.400 7.900 43.900 V3.400 C7.900 1.900 8.800 0.900 10.400 0.900 Z" fill="url(#f3_1)" stroke="#9c9c9c" stroke-width="1.300"/>
<path d="M8.500 35.700 H38.200 C40.600 35.700 42.100 34.500 42.700 32.400 M8.500 41 H38.200 C40.600 41 42.100 39.800 42.700 37.700" stroke="#b0b0b0" stroke-width="1.100" fill="none"/>
<g clip-path="url(#f3_c)"><rect x="16" y="7" width="19" height="24" fill="url(#f3_2)"/><path d="M16 23.800 H25.500 C28.200 23.800 28.600 22.100 28.800 20.100 C29 17.500 29.600 15.900 32 15.600 L35 14.900 V31.500 H16 Z" fill="url(#f3_3)"/></g>
<rect x="-0.700" y="25.700" width="23.700" height="23.700" rx="5.600" fill="#fff"/>
<rect x="0.300" y="26.700" width="21.700" height="21.700" rx="4.700" fill="url(#f3_4)"/>
<text x="11.100" y="43.900" font-family="Liberation Sans, sans-serif" font-weight="700" font-size="15.600" fill="#fff" text-anchor="middle">N</text></svg>
<div class="t " style="left:834.1px;top:673px;font-size:22.67px;line-height:30px;color:#242424;">Boats</div>
<div class="t " style="left:834.4px;top:705px;font-size:19.42px;line-height:26px;color:#707070;">My Files</div>
<div class="t " style="left:1396.5px;top:688px;font-size:22.21px;line-height:29px;color:#616161;letter-spacing:-0.052px;">Yesterday at 9:04 PM</div>
<div class="t " style="left:1726.2px;top:688px;font-size:22.21px;line-height:29px;color:#616161;letter-spacing:-0.074px;">Xavier Le Héricy</div>
<div style="position:absolute;left:736.0px;top:746.3px;width:1343.3px;height:1.0px;background:#efefef;"></div>
<svg style="position:absolute;left:757.2px;top:768.9px;" width="43.5" height="48.5" viewBox="0 0 43.5 48.5"><defs><linearGradient id="f4_1" x1="0" y1="0" x2="0" y2="1"><stop offset="0" stop-color="#fdfdfd"/><stop offset="1" stop-color="#eeeeee"/></linearGradient>
<linearGradient id="f4_2" x1="0" y1="0" x2="1" y2="0.500"><stop offset="0" stop-color="#d55ef5"/><stop offset="0.6" stop-color="#e07af6"/><stop offset="1" stop-color="#f08fdc"/></linearGradient>
<linearGradient id="f4_3" x1="0" y1="0" x2="0.5" y2="1"><stop offset="0" stop-color="#7a1cb4"/><stop offset="1" stop-color="#a83ad8"/></linearGradient>
<linearGradient id="f4_4" x1="0" y1="0" x2="0.8" y2="1"><stop offset="0" stop-color="#9a22d8"/><stop offset="1" stop-color="#56068c"/></linearGradient>
<clipPath id="f4_c"><rect x="16.200" y="7.200" width="18.200" height="23" rx="2.400"/></clipPath></defs>
<path d="M10.400 0.900 H35.500 C40 0.900 43.300 4.200 43.300 8.700 V41.500 C43.300 44.500 41.500 46.400 38.500 46.400 H10.400 C8.800 46.400 7.900 45.400 7.900 43.900 V3.400 C7.900 1.900 8.800 0.900 10.400 0.900 Z" fill="url(#f4_1)" stroke="#9c9c9c" stroke-width="1.300"/>
<path d="M8.500 35.700 H38.200 C40.600 35.700 42.100 34.500 42.700 32.400 M8.500 41 H38.200 C40.600 41 42.100 39.800 42.700 37.700" stroke="#b0b0b0" stroke-width="1.100" fill="none"/>
<g clip-path="url(#f4_c)"><rect x="16" y="7" width="19" height="24" fill="url(#f4_2)"/><path d="M16 23.800 H25.500 C28.200 23.800 28.600 22.100 28.800 20.100 C29 17.500 29.600 15.900 32 15.600 L35 14.900 V31.500 H16 Z" fill="url(#f4_3)"/></g>
<rect x="-0.700" y="25.700" width="23.700" height="23.700" rx="5.600" fill="#fff"/>
<rect x="0.300" y="26.700" width="21.700" height="21.700" rx="4.700" fill="url(#f4_4)"/>
<text x="11.100" y="43.900" font-family="Liberation Sans, sans-serif" font-weight="700" font-size="15.600" fill="#fff" text-anchor="middle">N</text></svg>
<div class="t " style="left:835.5px;top:766px;font-size:22.21px;line-height:29px;color:#242424;letter-spacing:-0.033px;">Xavier-Xavier-LG</div>
<div class="t " style="left:834.4px;top:797px;font-size:19.42px;line-height:26px;color:#707070;">My Files</div>
<div class="t " style="left:1396.5px;top:780px;font-size:22.32px;line-height:29px;color:#616161;">Yesterday at 8:14 AM</div>
<div class="t " style="left:1726.2px;top:780px;font-size:22.21px;line-height:29px;color:#616161;letter-spacing:-0.074px;">Xavier Le Héricy</div>
<div style="position:absolute;left:736.0px;top:838.7px;width:1343.3px;height:1.0px;background:#efefef;"></div>
<svg style="position:absolute;left:763.6px;top:861.6px;" width="36.8" height="47.0" viewBox="0 0 36.8 47"><defs><linearGradient id="g5" x1="0" y1="0" x2="0" y2="1"><stop offset="0" stop-color="#fdfdfd"/><stop offset="1" stop-color="#ededed"/></linearGradient></defs>
<path d="M3.400 0.800 H27.800 C32.400 0.800 36 4.400 36 9 V42 C36 44.500 34.400 46.200 31.900 46.200 H9 C4.400 46.200 0.800 42.600 0.800 38 V3.400 C0.800 1.800 1.800 0.800 3.400 0.800 Z" fill="url(#g5)" stroke="#999" stroke-width="1.500"/>
<path d="M8.700 25.900 H28.200 M8.700 30.800 H28.200 M8.700 35.700 H28.200" stroke="#767676" stroke-width="1.700" fill="none"/>
<text x="18.400" y="17.800" font-family="Liberation Sans, sans-serif" font-weight="700" font-size="10.400" fill="#d0021b" text-anchor="middle" letter-spacing="0.350">PDF</text></svg>
<div class="t " style="left:834.1px;top:857px;font-size:22.70px;line-height:30px;color:#242424;">MultiPlus-3kVA-120VAC-12VDC-2x200Ah-Li-NG-...</div>
<div class="t " style="left:834.4px;top:890px;font-size:19.42px;line-height:26px;color:#707070;">My Files</div>
<div class="t " style="left:1396.0px;top:872px;font-size:22.57px;line-height:29px;color:#616161;">Sat at 12:51 AM</div>
<div style="position:absolute;left:736.0px;top:931.0px;width:1343.3px;height:1.0px;background:#efefef;"></div>
<svg style="position:absolute;left:763.6px;top:954.0px;" width="36.8" height="47.0" viewBox="0 0 36.8 47"><defs><linearGradient id="g6" x1="0" y1="0" x2="0" y2="1"><stop offset="0" stop-color="#fdfdfd"/><stop offset="1" stop-color="#ededed"/></linearGradient></defs>
<path d="M3.400 0.800 H27.800 C32.400 0.800 36 4.400 36 9 V42 C36 44.500 34.400 46.200 31.900 46.200 H9 C4.400 46.200 0.800 42.600 0.800 38 V3.400 C0.800 1.800 1.800 0.800 3.400 0.800 Z" fill="url(#g6)" stroke="#999" stroke-width="1.500"/>
<path d="M8.700 25.900 H28.200 M8.700 30.800 H28.200 M8.700 35.700 H28.200" stroke="#767676" stroke-width="1.700" fill="none"/>
<text x="18.400" y="17.800" font-family="Liberation Sans, sans-serif" font-weight="700" font-size="10.400" fill="#d0021b" text-anchor="middle" letter-spacing="0.350">PDF</text></svg>
<div class="t " style="left:834.2px;top:950px;font-size:23.21px;line-height:30px;color:#242424;">153833 Digital Multi Control 200-200A display pa...</div>
<div class="t " style="left:834.4px;top:982px;font-size:19.42px;line-height:26px;color:#707070;">My Files</div>
<div class="t " style="left:1396.0px;top:965px;font-size:22.57px;line-height:29px;color:#616161;">Sat at 12:51 AM</div>
<div style="position:absolute;left:736.0px;top:1023.3px;width:1343.3px;height:1.0px;background:#efefef;"></div>
<svg style="position:absolute;left:763.6px;top:1046.3px;" width="36.8" height="47.0" viewBox="0 0 36.8 47"><defs><linearGradient id="g7" x1="0" y1="0" x2="0" y2="1"><stop offset="0" stop-color="#fdfdfd"/><stop offset="1" stop-color="#ededed"/></linearGradient></defs>
<path d="M3.400 0.800 H27.800 C32.400 0.800 36 4.400 36 9 V42 C36 44.500 34.400 46.200 31.900 46.200 H9 C4.400 46.200 0.800 42.600 0.800 38 V3.400 C0.800 1.800 1.800 0.800 3.400 0.800 Z" fill="url(#g7)" stroke="#999" stroke-width="1.500"/>
<path d="M8.700 25.900 H28.200 M8.700 30.800 H28.200 M8.700 35.700 H28.200" stroke="#767676" stroke-width="1.700" fill="none"/>
<text x="18.400" y="17.800" font-family="Liberation Sans, sans-serif" font-weight="700" font-size="10.400" fill="#d0021b" text-anchor="middle" letter-spacing="0.350">PDF</text></svg>
<div class="t " style="left:834.2px;top:1043px;font-size:22.39px;line-height:29px;color:#242424;">Manual-Galvanic-Isolator-EN-NL-FR-DE-ES-IT-TR</div>
<div class="t " style="left:834.4px;top:1074px;font-size:19.42px;line-height:26px;color:#707070;">My Files</div>
<div class="t " style="left:1396.0px;top:1057px;font-size:22.57px;line-height:29px;color:#616161;">Sat at 12:51 AM</div>
<div style="position:absolute;left:736.0px;top:1115.7px;width:1343.3px;height:1.0px;background:#efefef;"></div>
<svg style="position:absolute;left:763.6px;top:1138.7px;" width="36.8" height="47.0" viewBox="0 0 36.8 47"><defs><linearGradient id="g8" x1="0" y1="0" x2="0" y2="1"><stop offset="0" stop-color="#fdfdfd"/><stop offset="1" stop-color="#ededed"/></linearGradient></defs>
<path d="M3.400 0.800 H27.800 C32.400 0.800 36 4.400 36 9 V42 C36 44.500 34.400 46.200 31.900 46.200 H9 C4.400 46.200 0.800 42.600 0.800 38 V3.400 C0.800 1.800 1.800 0.800 3.400 0.800 Z" fill="url(#g8)" stroke="#999" stroke-width="1.500"/>
<path d="M8.700 25.900 H28.200 M8.700 30.800 H28.200 M8.700 35.700 H28.200" stroke="#767676" stroke-width="1.700" fill="none"/>
<text x="18.400" y="17.800" font-family="Liberation Sans, sans-serif" font-weight="700" font-size="10.400" fill="#d0021b" text-anchor="middle" letter-spacing="0.350">PDF</text></svg>
<div class="t " style="left:834.2px;top:1135px;font-size:23.21px;line-height:30px;color:#242424;">153833 Digital Multi Control 200-200A display pa...</div>
<div class="t " style="left:834.4px;top:1167px;font-size:19.42px;line-height:26px;color:#707070;">My Files</div>
<div class="t " style="left:1396.0px;top:1150px;font-size:22.57px;line-height:29px;color:#616161;">Sat at 12:51 AM</div>
<div style="position:absolute;left:736.0px;top:1208.0px;width:1343.3px;height:1.0px;background:#efefef;"></div>
<svg style="position:absolute;left:763.6px;top:1231.0px;" width="36.8" height="47.0" viewBox="0 0 36.8 47"><defs><linearGradient id="g9" x1="0" y1="0" x2="0" y2="1"><stop offset="0" stop-color="#fdfdfd"/><stop offset="1" stop-color="#ededed"/></linearGradient></defs>
<path d="M3.400 0.800 H27.800 C32.400 0.800 36 4.400 36 9 V42 C36 44.500 34.400 46.200 31.900 46.200 H9 C4.400 46.200 0.800 42.600 0.800 38 V3.400 C0.800 1.800 1.800 0.800 3.400 0.800 Z" fill="url(#g9)" stroke="#999" stroke-width="1.500"/>
<path d="M8.700 25.900 H28.200 M8.700 30.800 H28.200 M8.700 35.700 H28.200" stroke="#767676" stroke-width="1.700" fill="none"/>
<text x="18.400" y="17.800" font-family="Liberation Sans, sans-serif" font-weight="700" font-size="10.400" fill="#d0021b" text-anchor="middle" letter-spacing="0.350">PDF</text></svg>
<div class="t " style="left:835.7px;top:1228px;font-size:22.21px;line-height:29px;color:#242424;letter-spacing:-0.183px;">fiche_cfi_etats_unis</div>
<div class="t " style="left:834.4px;top:1259px;font-size:19.42px;line-height:26px;color:#707070;">My Files</div>
<div class="t " style="left:1396.0px;top:1242px;font-size:22.57px;line-height:29px;color:#616161;">Sat at 12:50 AM</div>
<div style="position:absolute;left:736.0px;top:1300.4px;width:1343.3px;height:1.0px;background:#efefef;"></div>
<svg style="position:absolute;left:763.6px;top:1323.4px;" width="36.8" height="47.0" viewBox="0 0 36.8 47"><defs><linearGradient id="g10" x1="0" y1="0" x2="0" y2="1"><stop offset="0" stop-color="#fdfdfd"/><stop offset="1" stop-color="#ededed"/></linearGradient></defs>
<path d="M3.400 0.800 H27.800 C32.400 0.800 36 4.400 36 9 V42 C36 44.500 34.400 46.200 31.900 46.200 H9 C4.400 46.200 0.800 42.600 0.800 38 V3.400 C0.800 1.800 1.800 0.800 3.400 0.800 Z" fill="url(#g10)" stroke="#999" stroke-width="1.500"/>
<path d="M8.700 25.900 H28.200 M8.700 30.800 H28.200 M8.700 35.700 H28.200" stroke="#767676" stroke-width="1.700" fill="none"/>
<text x="18.400" y="17.800" font-family="Liberation Sans, sans-serif" font-weight="700" font-size="10.400" fill="#d0021b" text-anchor="middle" letter-spacing="0.350">PDF</text></svg>
<div class="t " style="left:835.7px;top:1320px;font-size:22.21px;line-height:29px;color:#242424;letter-spacing:-0.362px;">fiche_cfi_usa</div>
<div class="t " style="left:834.4px;top:1352px;font-size:19.42px;line-height:26px;color:#707070;">My Files</div>
<div class="t " style="left:1396.0px;top:1334px;font-size:22.57px;line-height:29px;color:#616161;">Sat at 12:50 AM</div>
<div style="position:absolute;left:736.0px;top:1392.7px;width:1343.3px;height:1.0px;background:#efefef;"></div>
<div style="position:absolute;left:0.0px;top:1412.0px;width:2154.0px;height:55.0px;background:#f6f6f6;"></div>
<div style="position:absolute;left:233.5px;top:1411.7px;width:1920.5px;height:1.3px;background:#d6d6d6;"></div>
<div style="position:absolute;left:0.0px;top:1412.0px;width:233.5px;height:1.0px;background:#f6f6f6;"></div>
<svg style="position:absolute;left:1540.0px;top:1415.0px;" width="240.0" height="52.0" viewBox="0 0 240 52"><g fill="none" stroke="#2b2b2b" stroke-width="2.100" stroke-linecap="round" stroke-linejoin="round">
<rect x="16.900" y="13.900" width="24.100" height="24.300" rx="5.500"/>
<path d="M22.300 32.900 L35.900 19.500 M29.200 19.800 H36.200 V26.700 M22.100 26.200 V33.200 H29"/>
<path d="M78.300 20 H79.600 L81 17.600 C81.400 17 81.900 16.700 82.600 16.700 H89.300 C90 16.700 90.500 17 90.900 17.600 L92.300 20 H93.800 C95.800 20 97 21.300 97 23.200 V31.400 C97 33.300 95.800 34.600 93.800 34.600 H78.300 C76.300 34.600 75.100 33.300 75.100 31.400 V23.200 C75.100 21.300 76.300 20 78.300 20 Z"/>
<circle cx="86" cy="27.600" r="2.300" stroke-width="1.800"/>
<rect x="132.400" y="15.600" width="23.400" height="20.700" rx="3"/>
<path d="M200.600 20.100 L194.100 25.400 L200 30.300 M203.900 23.400 L210.400 28.700 L204.100 34.300" stroke-linecap="butt" stroke-linejoin="miter"/>
</g><path d="M144.100 16.600 V35.300 M133.400 26 H154.800" stroke="#d8d8d8" stroke-width="1.600" fill="none"/></svg>
<div class="t " style="left:1786.6px;top:1429px;font-size:18.91px;line-height:25px;color:#2b2b2b;letter-spacing:-0.805px;">Reset</div>
<div style="position:absolute;left:1851.4px;top:1438.2px;width:212.0px;height:6.0px;background:#6e6e6e;border-radius:3px;"></div>
<div style="position:absolute;left:1882.0px;top:1428.0px;width:26.6px;height:26.6px;background:#fff;border:1.5px solid #8a8a8a;border-radius:50%;box-sizing:border-box;box-shadow:0 1px 2px rgba(0,0,0,.2);"></div>
<div class="t " style="left:2072.1px;top:1429px;font-size:18.91px;line-height:25px;color:#2b2b2b;letter-spacing:-0.504px;">100 %</div>
</body></html>
